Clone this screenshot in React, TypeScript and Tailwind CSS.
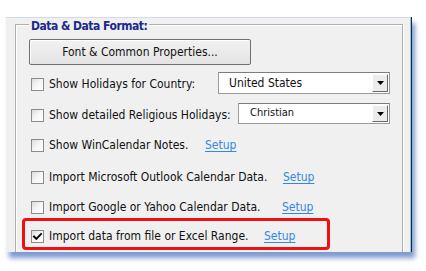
import React from "react";

const font = { fontFamily: '"DejaVu Sans Condensed", "DejaVu Sans", Tahoma, sans-serif' };

function Checkbox({ checked = false }: { checked?: boolean }) {
  return (
    <div className="w-[13px] h-[13px] shrink-0 border border-[#8b8b8b] bg-gradient-to-br from-[#dcdcdc] via-[#f6f6f6] to-white flex items-center justify-center">
      {checked && (
        <svg width="11" height="11" viewBox="0 0 11 11">
          <path d="M2 5.5 L4.3 7.8 L9 3" fill="none" stroke="#000" strokeWidth="1.9" strokeLinecap="square" />
        </svg>
      )}
    </div>
  );
}

function Setup() {
  return <span className="text-[#3388e0] underline underline-offset-2 decoration-1">Setup</span>;
}

function Dropdown({ text, w, h, small }: { text: string; w: string; h: string; small?: boolean }) {
  return (
    <div className={`${w} ${h} bg-white border border-[#9a9a9a] border-t-[#7d7d7d] flex items-center justify-between pr-[1px]`}>
      <span className={small ? "pl-[11px] text-[11px]" : "pl-[10px] text-[12px]"}>{text}</span>
      <div className="w-[16px] h-[calc(100%-2px)] bg-[#ececec] border-t border-l border-t-white border-l-white border-r border-b border-r-[#6a6a6a] border-b-[#6a6a6a] flex items-center justify-center">
        <svg width="7" height="4" viewBox="0 0 7 4">
          <path d="M0 0 H7 L3.5 4 Z" fill="#000" />
        </svg>
      </div>
    </div>
  );
}

export default function App() {
  return (
    <div className="w-[426px] h-[271px] bg-white text-[12px] text-[#111]" style={font}>
      <div className="pt-[17px] pl-[5px]">
        <div className="w-[406px] h-[235px] bg-[#f0f0f0] border-t border-l border-t-[#d3dbe8] border-l-[#f9f9f9] border-r border-r-[#86c5ea] overflow-hidden shadow-[1px_0_0_0_#1e2a38,4px_6px_5px_rgba(70,110,185,0.7)]">
          <div className="relative ml-[9px] mt-[6px] w-[388px] h-[240px] border border-[#b0b0b0] shadow-[inset_1px_1px_0_#fff,1px_1px_0_#fff]">
            <div className="absolute left-[13px] top-[-7px] px-[2px] bg-[#f0f0f0] font-bold text-[#1c2a8c] text-[12px] leading-[16px] tracking-[-0.5px]">
              Data &amp; Data Format:
            </div>
            <div className="ml-[13px] mt-[14px] w-[222px] h-[26px] rounded-[2px] border border-[#707070] bg-gradient-to-b from-[#f2f2f2] to-[#e3e3e3] shadow-[inset_1px_1px_0_#fff] flex items-center justify-center">
              Font &amp; Common Properties...
            </div>

            <div className="flex flex-col">
              <div className="mt-[8px] h-[22px] ml-[15px] flex items-center">
                <Checkbox />
                <span className="ml-[5px] w-[169px] whitespace-nowrap">Show Holidays for Country:</span>
                <div className="mb-[3px]">
                  <Dropdown text="United States" w="w-[172px]" h="h-[22px]" />
                </div>
              </div>
              <div className="mt-[9px] h-[22px] ml-[15px] flex items-center">
                <Checkbox />
                <span className="ml-[5px] w-[189px] whitespace-nowrap">Show detailed Religious Holidays:</span>
                <div className="mb-[3px]">
                  <Dropdown text="Christian" w="w-[152px]" h="h-[21px]" small />
                </div>
              </div>
              <div className="mt-[8px] h-[22px] ml-[15px] flex items-center">
                <Checkbox />
                <span className="ml-[5px] w-[156px] whitespace-nowrap">Show WinCalendar Notes.</span>
                <Setup />
              </div>
              <div className="mt-[10px] h-[22px] ml-[15px] flex items-center">
                <Checkbox />
                <span className="ml-[5px] w-[234px] whitespace-nowrap">Import Microsoft Outlook Calendar Data.</span>
                <Setup />
              </div>
              <div className="mt-[8px] h-[22px] ml-[15px] flex items-center">
                <Checkbox />
                <span className="ml-[5px] w-[233px] whitespace-nowrap">Import Google or Yahoo Calendar Data.</span>
                <Setup />
              </div>
              <div className="ml-[6px] w-[308px] h-[32px] pt-[4px] border-[3px] border-[#ee1111] rounded-[4px] pl-[6px] flex items-center">
                <Checkbox checked />
                <span className="ml-[5px] w-[215px] whitespace-nowrap">Import data from file or Excel Range.</span>
                <Setup />
              </div>
            </div>
          </div>
        </div>
      </div>
    </div>
  );
}
